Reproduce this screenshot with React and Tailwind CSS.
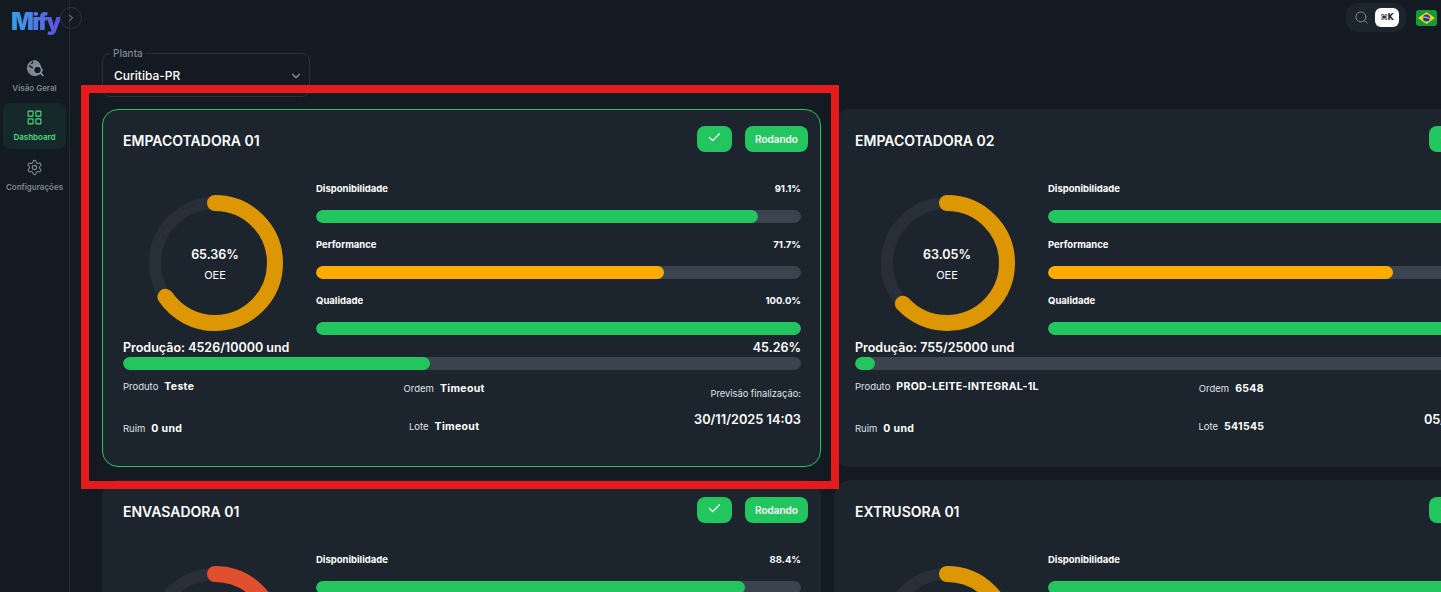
import React from 'react';
import { Check, ChevronDown, ChevronRight, LayoutGrid, Search, Settings } from 'lucide-react';

const machines = [
  { name: 'EMPACOTADORA 01', oee: 65.36, ring: '#dd9705', disp: 91.1, perf: 71.7, qual: 100, made: '4526/10000', pct: 45.26, produto: 'Teste', ordem: 'Timeout', lote: 'Timeout', fim: '30/11/2025 14:03', selected: true },
  { name: 'EMPACOTADORA 02', oee: 63.05, ring: '#dd9705', disp: 95.2, perf: 71.1, qual: 100, made: '755/25000', pct: 3.02, produto: 'PROD-LEITE-INTEGRAL-1L', ordem: '6548', lote: '541545', fim: '05/12/2025 09:41' },
  { name: 'ENVASADORA 01', oee: 42.1, ring: '#e04f2e', disp: 88.4, perf: 60.5, qual: 100, made: '1200/8000', pct: 15, produto: 'Teste', ordem: 'Timeout', lote: 'Timeout', fim: '30/11/2025 18:20' },
  { name: 'EXTRUSORA 01', oee: 60.2, ring: '#dd9705', disp: 90, perf: 70, qual: 100, made: '900/5000', pct: 18, produto: 'Teste', ordem: 'Timeout', lote: 'Timeout', fim: '30/11/2025 19:10' },
];

function GlobeSearch() {
  return (
    <svg width="18" height="18" viewBox="0 0 18 18" fill="none">
      <path d="M9 1a8 8 0 1 0 2 15.7 8 8 0 0 0 5.9-6.2l-1.7-1.2V9a8 8 0 0 0-6.2-8Z" fill="#7b8794" />
      <circle cx="11.5" cy="11" r="4" fill="#141a21" stroke="#8d99a6" strokeWidth="1.5" />
      <path d="m14.5 14 2.5 2.5" stroke="#8d99a6" strokeWidth="1.6" strokeLinecap="round" />
      <path d="M3 7c2 0 2 1.5 4 2M7 2.5 5.5 5" stroke="#141a21" strokeWidth="1.4" />
    </svg>
  );
}

function BrazilFlag() {
  return (
    <svg width="21" height="16" viewBox="0 0 21 16" className="rounded-[3px]">
      <rect width="21" height="16" fill="#169b3c" />
      <path d="M10.500 2 19 8l-8.500 6L2 8Z" fill="#f7d117" />
      <circle cx="10.500" cy="8" r="3.500" fill="#1f3f8f" />
      <path d="M7.200 7.200c2.300-.3 4.800.3 6.500 1.800" stroke="#fff" strokeWidth=".8" fill="none" />
    </svg>
  );
}

function NavItem({ icon, label, active }) {
  return (
    <div className={`flex h-[46px] w-[63px] flex-col items-center justify-center gap-[5px] rounded-lg ${active ? 'bg-[#15292a] text-[#4ade80]' : 'text-[#7b8794]'}`}>
      {icon}
      <span className="text-[8px] leading-[12px] font-semibold whitespace-nowrap">{label}</span>
    </div>
  );
}

function Donut({ value, color }) {
  const r = 60;
  const length = 2 * Math.PI * r;
  return (
    <div className="relative mt-[43px] ml-[24px] h-[136px] w-[136px] shrink-0">
      <svg width="136" height="136" viewBox="0 0 136 136">
        <circle cx="68" cy="68" r="60" fill="none" stroke="#282f39" strokeWidth="12" />
        <circle cx="68" cy="68" r={r} fill="none" stroke={color} strokeWidth="16" strokeLinecap="round" strokeDasharray={`${(length * value) / 100} ${length}`} transform="rotate(-90 68 68)" />
      </svg>
      <div className="absolute inset-0 flex flex-col items-center justify-center pt-[4px] text-white">
        <span className="text-[12.500px] leading-[20px] font-semibold">{value.toFixed(2)}%</span>
        <span className="text-[11px] leading-[20px]">OEE</span>
      </div>
    </div>
  );
}

function Bar({ value, color, className }) {
  return (
    <div className={`h-[13px] overflow-hidden rounded-full bg-[#3a434e] ${className || ''}`}>
      <div className="h-full rounded-full" style={{ width: `${value}%`, backgroundColor: color }} />
    </div>
  );
}

function Metric({ label, value, color }) {
  return (
    <div>
      <div className="mb-[14px] flex h-[16px] items-center justify-between pt-[2px] text-[9.500px] font-bold text-white">
        <span>{label}</span>
        <span>{value.toFixed(1)}%</span>
      </div>
      <Bar value={value} color={color} />
    </div>
  );
}

function Detail({ label, value }) {
  return (
    <div className="flex h-[16px] items-center gap-[6px] whitespace-nowrap">
      <span className="text-[9.500px] text-[#dfe3e8]">{label}</span>
      <span className="text-[10.500px] font-bold tracking-[0.03em] text-white">{value}</span>
    </div>
  );
}

function MachineCard({ m }) {
  return (
    <div className={`h-[358px] w-[719px] rounded-2xl border bg-[#1c252e] pt-[16px] pr-[12px] pl-[20px] ${m.selected ? 'border-[#22c55e]' : 'border-[#1c252e]'}`}>
      <div className="flex h-[26px] items-center justify-between">
        <h2 className="mt-[3px] text-[14px] font-semibold text-white">{m.name}</h2>
        <div className="flex gap-[13px]">
          <div className="flex h-[26px] w-[35px] items-center justify-center rounded-lg bg-[#22c55e] text-white">
            <Check size={15} strokeWidth={2} className="-mt-[3px]" />
          </div>
          <div className="flex h-[26px] w-[63px] items-center justify-center rounded-lg bg-[#22c55e] text-[10px] font-semibold text-white">Rodando</div>
        </div>
      </div>
      <div className="pr-[7px]">
        <div className="flex">
          <Donut value={m.oee} color={m.ring} />
          <div className="mt-[28px] ml-[33px] flex flex-1 flex-col gap-[13px]">
            <Metric label="Disponibilidade" value={m.disp} color="#22c55e" />
            <Metric label="Performance" value={m.perf} color="#ffab00" />
            <Metric label="Qualidade" value={m.qual} color="#22c55e" />
          </div>
        </div>
        <div className="mt-[2px] flex h-[20px] items-center justify-between pt-[2px] text-[12.500px] font-semibold text-white">
          <span>Produção: {m.made} und</span>
          <span>{m.pct.toFixed(2)}%</span>
        </div>
        <Bar value={m.pct} color="#22c55e" />
        <div className="flex justify-between">
          <div className="flex flex-col items-start gap-[26px] pt-[9px]">
            <Detail label="Produto" value={m.produto} />
            <Detail label="Ruim" value="0 und" />
          </div>
          <div className="flex flex-col items-center gap-[22px] pt-[11px]">
            <Detail label="Ordem" value={m.ordem} />
            <Detail label="Lote" value={m.lote} />
          </div>
          <div className="flex flex-col items-end gap-[10px] pt-[16px]">
            <span className="text-[9.300px] leading-[16px] text-[#dfe3e8]">Previsão finalização:</span>
            <span className="text-[12.750px] leading-[16px] font-semibold whitespace-nowrap text-white">{m.fim}</span>
          </div>
        </div>
      </div>
    </div>
  );
}

export default function App() {
  return (
    <div className="relative flex h-[592px] w-[1441px] overflow-hidden bg-[#141a21] font-['Inter',sans-serif]">
      <aside className="flex w-[70px] shrink-0 flex-col border-r border-[#222a33] pl-[3px]">
        <div className="flex h-[36px] items-start pt-[8px] pl-[8px]">
          <span className="bg-gradient-to-r from-[#2ea1ea] to-[#5b4fe0] bg-clip-text text-[24px] leading-[28px] font-black tracking-[-0.07em] text-transparent">Mify</span>
        </div>
        <nav className="mt-[17px] flex flex-col gap-[4px]">
          <NavItem icon={<GlobeSearch />} label="Visão Geral" />
          <NavItem icon={<LayoutGrid size={17} strokeWidth={1.6} />} label="Dashboard" active />
          <NavItem icon={<Settings size={17} strokeWidth={1.6} />} label="Configurações" />
        </nav>
      </aside>
      <div className="absolute top-[7px] left-[60px] flex h-[22px] w-[22px] items-center justify-center rounded-full border border-[#2a323c] text-[#8d99a6]">
        <ChevronRight size={12} />
      </div>

      <main className="min-w-0 flex-1">
        <header className="flex h-[36px] items-start justify-end pt-[3px] pr-[4px]">
          <div className="flex h-[29px] w-[60px] items-center justify-between rounded-xl bg-[#1c252e] pr-[7px] pl-[8px] text-[#7b8794]">
            <Search size={15} strokeWidth={1.6} />
            <span className="flex h-[19px] w-[24px] items-center justify-center rounded-md bg-white font-['DejaVu_Sans',sans-serif] text-[8px] font-bold text-[#1c252e]">⌘K</span>
          </div>
          <div className="mt-[7px] ml-[10px]">
            <BrazilFlag />
          </div>
        </header>
        <div className="pl-[32px]">
          <div className="relative mt-[17px] flex h-[44px] w-[208px] items-center justify-between rounded-lg border border-[#2a323c] pt-[2px] pr-[6px] pl-[11px] text-[12px] font-medium text-white">
            <span className="absolute -top-[8px] left-[7px] bg-[#141a21] px-[3px] text-[10px] leading-[14px] font-medium text-[#7b8794]">Planta</span>
            <span>Curitiba-PR</span>
            <ChevronDown size={14} className="text-[#8d99a6]" />
          </div>
          <div className="mt-[12px] grid w-[1451px] grid-cols-[719px_719px] gap-[13px]">
            {machines.map((m) => (
              <MachineCard key={m.name} m={m} />
            ))}
          </div>
        </div>
      </main>

      <div className="pointer-events-none absolute top-[85px] left-[81px] h-[404px] w-[758px] border-[8px] border-[#e61c1c]" />
    </div>
  );
}
